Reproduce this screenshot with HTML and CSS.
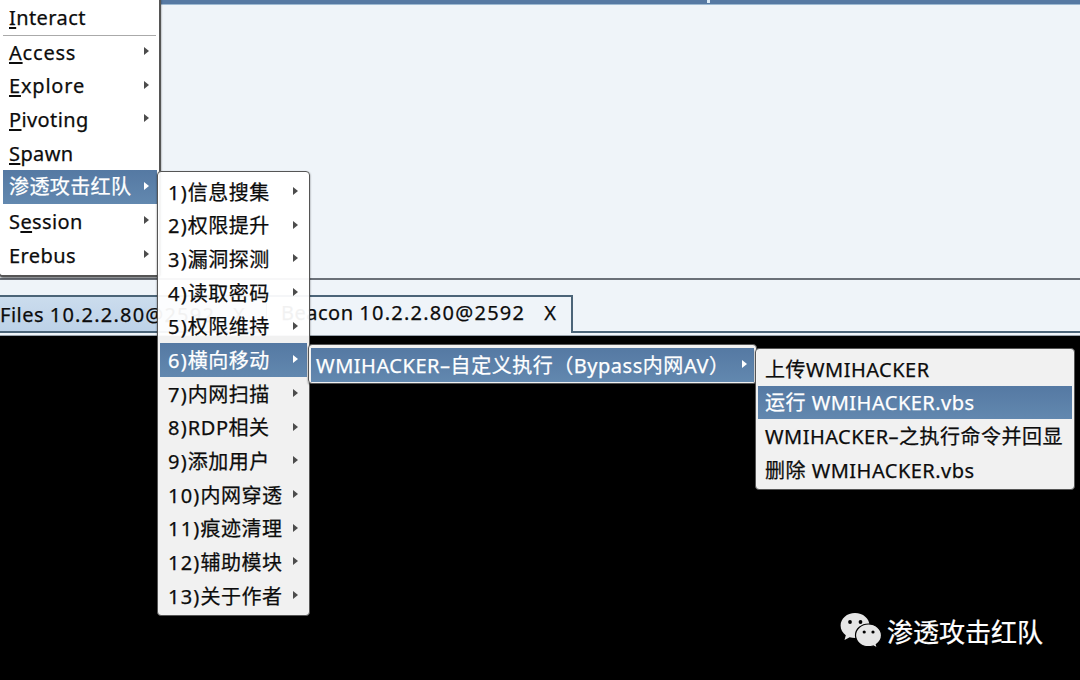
FILE: index.html
```
<!DOCTYPE html>
<html lang="zh">
<head>
<meta charset="utf-8">
<title>Beacon</title>
<link rel="stylesheet" href="styles.css">
</head>
<body>
<div class="app">
  <div class="table-pane"><div class="table-head"><i class="col-mark"></i></div></div>
  <div class="tabbar">
    <div class="tab files"><span>Files <b class="num">10.2.2.80@2592</b></span><span>X</span></div>
    <div class="tab beacon"><span>Beacon <b class="num">10.2.2.80@2592</b></span><span>X</span></div>
    <div class="tab-rest"></div>
  </div>
  <div class="console"></div>

  <div class="watermark">
    <svg class="wechat" viewBox="0 0 42 36" width="42" height="36">
      <path fill="#e6e6e6" d="M15 1C7 1 .6 6.500.6 13.600c0 4 2 7.400 5.200 9.700L4.500 28l5.200-2.700c1.700.5 3.500.8 5.500.8C23 26 29.500 20.500 29.500 13.500S23 1 15 1z"/>
      <path fill="#e6e6e6" stroke="#000" stroke-width="1.200" d="M28.500 12C21.400 12 15.500 17 15.500 23.300s5.900 11.400 13 11.400c1.600 0 3.200-.3 4.600-.7l4.300 2.100-1.100-3.700c3.200-2.100 5.200-5.400 5.200-9.100C41.500 17 35.600 12 28.500 12z"/>
      <g fill="#000"><circle cx="10" cy="10" r="1.900"/><circle cx="20.500" cy="10" r="1.900"/><circle cx="24.200" cy="20" r="1.600"/><circle cx="33" cy="20" r="1.600"/></g>
    </svg>
    <span>渗透攻击红队</span>
  </div>

  <div class="menu main">
    <div class="item"><span><u>I</u>nteract</span></div>
    <div class="sep"></div>
    <div class="item sub"><span class="wide"><u>A</u>ccess</span></div>
    <div class="item sub"><span class="wide"><u>E</u>xplore</span></div>
    <div class="item sub"><span><u>P</u>ivoting</span></div>
    <div class="item"><span><u>S</u>pawn</span></div>
    <div class="item sub on"><span>渗透攻击红队</span></div>
    <div class="item sub low"><span>S<u>e</u>ssion</span></div>
    <div class="item sub low"><span>Erebus</span></div>
  </div>

  <div class="menu second">
    <div class="item sub"><span><b class="num">1)</b>信息搜集</span></div>
    <div class="item sub"><span><b class="num">2)</b>权限提升</span></div>
    <div class="item sub"><span><b class="num">3)</b>漏洞探测</span></div>
    <div class="item sub"><span><b class="num">4)</b>读取密码</span></div>
    <div class="item sub"><span><b class="num">5)</b>权限维持</span></div>
    <div class="item sub on"><span><b class="num">6)</b>横向移动</span></div>
    <div class="item sub"><span><b class="num">7)</b>内网扫描</span></div>
    <div class="item sub"><span><b class="num">8)</b>RDP相关</span></div>
    <div class="item sub"><span><b class="num">9)</b>添加用户</span></div>
    <div class="item sub"><span><b class="num">10)</b>内网穿透</span></div>
    <div class="item sub"><span><b class="num">11)</b>痕迹清理</span></div>
    <div class="item sub"><span><b class="num">12)</b>辅助模块</span></div>
    <div class="item sub"><span><b class="num">13)</b>关于作者</span></div>
  </div>

  <div class="menu third">
    <div class="item sub on"><span>WMIHACKER–自定义执行（Bypass内网AV）</span></div>
  </div>

  <div class="menu fourth">
    <div class="item"><span>上传WMIHACKER</span></div>
    <div class="item on"><span>运行 WMIHACKER.vbs</span></div>
    <div class="item"><span>WMIHACKER–之执行命令并回显</span></div>
    <div class="item"><span>删除 WMIHACKER.vbs</span></div>
  </div>
</div>
</body>
</html>
```
FILE: styles.css
```
* { box-sizing: border-box; }
body {
  margin: 0;
  font-family: "Noto Sans", "Noto Sans CJK SC", sans-serif;
  font-size: 20px;
  color: #0c0c0c;
  background: #000;
  -webkit-text-stroke: .25px currentColor;
}
.app {
  position: relative;
  width: 1080px;
  height: 680px;
  overflow: hidden;
  display: flex;
  flex-direction: column;
}
.table-pane {
  height: 280px;
  background: #eff4f9;
  border-bottom: 2px solid #6a7078;
}
.table-head {
  height: 5px;
  background: #5679a3;
  border-bottom: 1px solid #9db9d2;
  padding-left: 707px;
}
.col-mark { display: block; width: 3px; height: 3px; background: #dcebf7; }
.tabbar {
  height: 56px;
  padding-top: 15px;
  display: flex;
  background: #eff4f9;
  border-bottom: 1px solid #9aa3ac;
}
.tab {
  display: flex;
  border-top: 2px solid #4b6478;
  line-height: 36px;
  white-space: nowrap;
  letter-spacing: .5px;
}
.num { font-weight: 400; letter-spacing: 1.2px; }
.files {
  width: 267px;
  height: 38px;
  gap: 18px;
  background: linear-gradient(#cbdced, #bdd2e8);
  border-right: 1px solid #4b6478;
  border-bottom: 2px solid #4b6478;
}
.beacon {
  width: 306px;
  height: 38px;
  padding-left: 14px;
  gap: 19px;
  background: #eff4f9;
  border-right: 2px solid #4b6478;
  line-height: 32px;
}
.beacon .num { letter-spacing: 1.25px; }
.tab-rest { flex: 1; height: 38px; border-bottom: 2px solid #4b6478; }
.console { flex: 1; background: #000; }

.menu {
  position: absolute;
  background: rgba(255, 255, 255, .945);
  border: 1px solid #555;
  border-radius: 4px;
  padding: 3px 2px;
  box-shadow: 0 1px 2px rgba(0, 0, 0, .55);
}
.item {
  display: flex;
  align-items: center;
  justify-content: space-between;
  height: 33.7px;
  padding: 0 9px 0 7px;
  letter-spacing: .4px;
  line-height: 33.7px;
  white-space: nowrap;
}
.item.on { background: linear-gradient(#5579a3, #6288af); color: #fff; }
.item.sub::after {
  content: "";
  border-left: 5px solid #4c4c4c;
  border-top: 4.5px solid transparent;
  border-bottom: 4.5px solid transparent;
  margin-top: -3px;
}
.item.on.sub::after { border-left-color: #fff; }
.item u {
  text-decoration-thickness: 1.5px;
  text-underline-offset: 2px;
  text-decoration-skip-ink: none;
}
.item .wide { letter-spacing: .8px; }
.sep { height: 1px; background: #aaa; margin: 0 1px 0 1px; }

.main {
  left: -1px;
  top: -3px;
  width: 162px;
  height: 280px;
  background: #fff;
  border-width: 1px 2px 2px 1px;
}
.main .item { padding: 0 8px 0 7px; }
.main .item.on { margin-left: 1px; padding-left: 6px; }
.main .low { padding-top: 2px; }
.second { left: 157px; top: 171px; width: 153px; height: 445px; }
.second .item { padding-left: 8px; padding-top: 1px; letter-spacing: .5px; }
.third { left: 308px; top: 344px; width: 449px; height: 40px; }
.third .item { padding: 1px 7px 0 5px; letter-spacing: .53px; }
.fourth { left: 755px; top: 348px; width: 320px; height: 142px; }
.fourth .item { padding-top: 1px; letter-spacing: .48px; }

.watermark {
  position: absolute;
  left: 840px;
  top: 612px;
  display: flex;
  gap: 5px;
  color: #fff;
  font-size: 26px;
  line-height: 40px;
}
```
